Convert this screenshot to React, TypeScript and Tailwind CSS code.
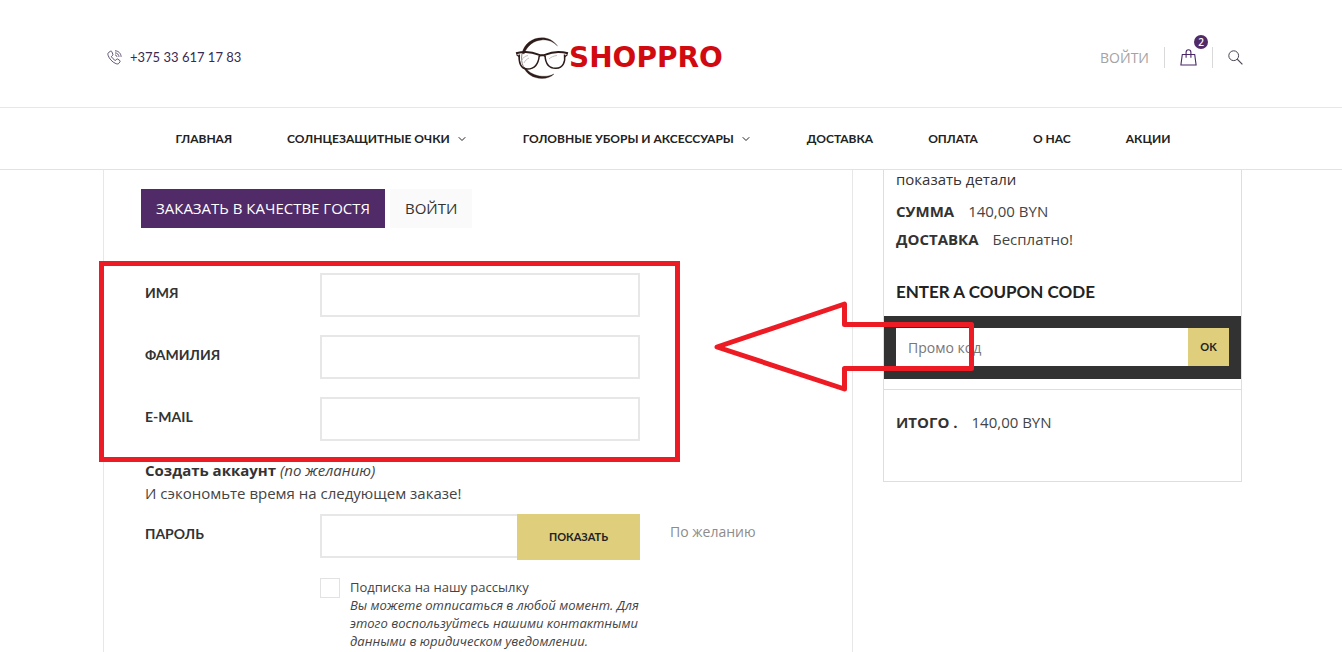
import { ChevronDown } from "lucide-react";

const navItems = [
  { title: "Главная" },
  { title: "Солнцезащитные очки", dropdown: true },
  { title: "Головные уборы и аксессуары", dropdown: true },
  { title: "Доставка" },
  { title: "Оплата" },
  { title: "О нас" },
  { title: "Акции" },
];

const fields = [
  { id: "firstname", label: "Имя", type: "text" },
  { id: "lastname", label: "Фамилия", type: "text" },
  { id: "email", label: "E-mail", type: "email" },
];

const PhoneIcon = () => (
  <svg width="15" height="15" viewBox="0 0 15 15" fill="none" stroke="#3b2a4f" strokeWidth="0.8">
    <path d="M3.6 1.2 1.7 2.4C.8 3.1.7 4.2 1.1 5.3c1 3.3 4.3 7 7.8 8.3 1.2.5 2.3.5 3.1-.4l1-1.5c.3-.5.2-.9-.2-1.2l-2-1.4c-.5-.3-.9-.3-1.2.1l-.8 1c-.3.3-.6.3-1 0C6.4 9.2 5.4 8.2 4.6 7c-.3-.4-.2-.7.1-.9l.9-.7c.4-.3.4-.7.2-1.2L4.8 1.6c-.3-.5-.7-.7-1.2-.4Z" />
    <path d="M8 .8c3.4 0 6.1 2.7 6.1 6.1M8 2.9c2.2 0 4 1.8 4 4M8 5c1.1 0 1.9.8 1.9 1.9" />
  </svg>
);

const BagIcon = () => (
  <svg width="17" height="17" viewBox="0 0 17 17" fill="none" stroke="#4a2767" strokeWidth="1.1">
    <path d="M2.3 5.5h12.4l1.4 10.5H.9L2.3 5.5Z" />
    <path d="M6.1 8.8V3.2C6.1 1.7 7 .8 8.5.8s2.4.9 2.4 2.4v5.6" />
  </svg>
);

const SearchIcon = () => (
  <svg width="15" height="15" viewBox="0 0 15 15" fill="none" stroke="#4b4453" strokeWidth="1">
    <circle cx="5.7" cy="5.7" r="4.9" />
    <path d="m9.2 9.2 5.2 5.2" strokeWidth="1.2" />
  </svg>
);

const GlassesLogo = () => (
  <svg width="54" height="42" viewBox="0 0 54 42" fill="none" stroke="#2d1c19">
    {/* brush ring, open on the right */}
    <path d="M42.500 9C38 3 32.500.8 27 .8 17 .8 9 7 7 16.500l2.200.3C12 9 18.500 3.400 27 2.900 33 2.500 38 4.500 42.500 9Z" fill="#2d1c19" strokeWidth="0.3" />
    <path d="M8.500 30c3 7 9.500 11.400 18.500 11.400 5 0 9-1.400 12-4.400-4 2-7.500 2.500-12 2.200C19.500 38.700 14 35.500 10.500 31Z" fill="#2d1c19" strokeWidth="0.3" />
    <path d="M7 16.500C6.200 21 6.500 26 8.500 30" stroke="#8d8380" strokeWidth="1" />
    {/* lenses */}
    <path d="M4.3 17.500C3.500 25 5.500 32 12.500 32c7.500 0 11-5.500 11.800-13.500" strokeWidth="1.5" />
    <path d="M30 18.500C30.500 26.500 34 31.500 41 31.300c7.500-.2 9.500-6.800 8.500-13.800" strokeWidth="1.5" />
    {/* frame top */}
    <path d="M1 16.300C8 14.500 17 14.800 23.500 17.600c2.300.8 4.700.8 7 0C37 14.800 46 14.500 53 16.300" strokeWidth="2" />
    <path d="M1.500 17.500 4.500 20M52.500 17.500l-3 2.500M24 19.500c2-1.300 4.500-1.300 6.500 0" strokeWidth="1.2" />
    <path d="M7 23c1-2.500 3-4 6-4.500M9 26c1-2.500 3-4 5-5M34 22c2-2 5-3.200 8-3.500" stroke="#b4aeab" strokeWidth="0.8" />
  </svg>
);

const Header = () => (
  <header className="border-b border-[#e7e7e7]">
    <div className="mx-auto grid h-[107px] max-w-[1144px] grid-cols-[1fr_320px_1fr] items-center pt-2 pl-2">
      <a href="tel:+375336171783" className="flex items-center gap-2 font-[Lato] text-[13px] text-[#3b2a4f]">
        <PhoneIcon />
        +375 33 617 17 83
      </a>
      <a href="/" className="flex items-center" aria-label="Shoppro">
        <GlassesLogo />
        <span className="font-['DejaVu_Sans'] text-[28px] leading-8 font-bold text-[#d10a10]">SHOPPRO</span>
      </a>
      <div className="flex items-center justify-end">
        <a href="/login" className="pr-[15px] text-sm text-[#a3a3a3]">
          ВОЙТИ
        </a>
        <a href="/cart" aria-label="Корзина" className="relative border-x border-[#d9d9d9] px-[15px] py-0.5">
          <BagIcon />
          <span className="absolute -top-3 right-1 flex size-3.5 items-center justify-center rounded-full bg-[#512b67] text-[10px] font-semibold text-white">
            2
          </span>
        </a>
        <button type="button" aria-label="Поиск" className="pl-[15px]">
          <SearchIcon />
        </button>
      </div>
    </div>
  </header>
);

const Nav = () => (
  <nav className="border-b border-[#e2e2e2]">
    <ul className="flex h-[61px] items-center justify-center gap-[55px] pl-1 font-[Lato] text-xs font-bold text-[#222] uppercase">
      {navItems.map((item) => (
        <li key={item.title}>
          <a href="#" className="flex items-center gap-1.5 whitespace-nowrap">
            {item.title}
            {item.dropdown && <ChevronDown className="size-3" />}
          </a>
        </li>
      ))}
    </ul>
  </nav>
);

const inputClass = "h-11 border-2 border-[#e7e7e7] bg-white px-3 text-sm outline-none";
const labelClass = "w-[175px] shrink-0 pt-2.5 font-[Lato] text-sm leading-5 font-bold uppercase";

const GuestForm = () => (
  <section className="border-x border-[#e7e7e7] pt-[19px] pb-1 pl-[37px]">
    <div className="flex gap-[5px] text-[15px]">
      <button type="button" className="h-[39px] bg-[#512b67] px-[15px] text-white">
        ЗАКАЗАТЬ В КАЧЕСТВЕ ГОСТЯ
      </button>
      <button type="button" className="h-[39px] bg-[#fafafa] px-[15px]">
        ВОЙТИ
      </button>
    </div>

    <form className="mt-[45px] pl-1">
      <div className="relative flex flex-col gap-[18px]">
        {fields.map((field) => (
          <div key={field.id} className="flex">
            <label htmlFor={field.id} className={labelClass}>
              {field.label}
            </label>
            <input id={field.id} type={field.type} className={`${inputClass} w-80`} />
          </div>
        ))}
        {/* required fields highlight */}
        <div className="pointer-events-none absolute -top-3 -bottom-[21px] -left-[46px] w-[581px] border-5 border-[#ed1c24]" />
      </div>

      <p className="mt-[18px] text-[15px] leading-[23px] text-[#444]">
        <strong className="text-[#333]">Создать аккаунт</strong> <em>(по желанию)</em>
        <br />
        И сэкономьте время на следующем заказе!
      </p>

      <div className="mt-[9px] flex">
        <label htmlFor="password" className={labelClass}>
          Пароль
        </label>
        <input id="password" type="password" className={`${inputClass} w-[197px] border-r-0`} />
        <button type="button" className="h-[46px] w-[123px] bg-[#dfce7c] font-[Lato] text-[11px] font-bold text-[#222]">
          ПОКАЗАТЬ
        </button>
        <span className="pt-2 pl-[30px] text-sm leading-5 text-[#8c8c8c]">По желанию</span>
      </div>

      <div className="mt-[18px] ml-[175px] flex w-[330px] gap-2.5">
        <input
          id="newsletter"
          type="checkbox"
          className="size-5 shrink-0 appearance-none border border-[#e2e2e2] bg-white"
        />
        <label htmlFor="newsletter" className="text-[13px] leading-[18px] text-[#444]">
          Подписка на нашу рассылку
          <br />
          <em>
            Вы можете отписаться в любой момент. Для этого воспользуйтесь нашими контактными данными в
            юридическом уведомлении.
          </em>
        </label>
      </div>
    </form>
  </section>
);

const Summary = () => (
  <aside className="self-start border border-t-0 border-[#dedede] text-[15px]">
    <div className="px-3">
      <a href="#" className="block leading-[19px]">
        показать детали
      </a>
      <dl className="mt-2 leading-7">
        <div className="flex gap-3.5">
          <dt className="font-bold">СУММА</dt>
          <dd className="text-[#444]">140,00 BYN</dd>
        </div>
        <div className="flex gap-3.5">
          <dt className="font-bold">ДОСТАВКА</dt>
          <dd className="text-[#444]">Бесплатно!</dd>
        </div>
      </dl>
      <h3 className="mt-[29px] font-[Lato] text-[17px] leading-5 font-bold text-[#222]">ENTER A COUPON CODE</h3>
    </div>
    <form className="mt-3.5 flex bg-[#323232] px-3 pt-3 pb-[13px]">
      <input
        aria-label="Промо код"
        placeholder="Промо код"
        className="h-[38px] min-w-0 flex-1 bg-white px-3 text-sm outline-none placeholder:text-[#777]"
      />
      <button type="button" className="h-[38px] w-[41px] bg-[#dfce7c] font-[Lato] text-[11px] font-bold text-[#222]">
        OK
      </button>
    </form>
    <div className="mt-2.5 flex gap-3.5 border-t border-[#dedede] px-3 pt-[18px] pb-[45px] leading-7">
      <span className="font-bold">ИТОГО .</span>
      <span className="text-[#444]">140,00 BYN</span>
    </div>
  </aside>
);

const Arrow = () => (
  <svg
    className="pointer-events-none absolute top-[130px] left-[608px]"
    width="264"
    height="94"
    viewBox="0 0 264 94"
    fill="none"
    stroke="#ed1c24"
    strokeWidth="5"
    strokeLinejoin="round"
  >
    <path d="M6 47 133.500 4v20.500H260.500v44H133.500V89Z" />
  </svg>
);

export default function App() {
  return (
    <div className="flex min-h-screen flex-col bg-white font-['Open_Sans',sans-serif] text-[#333]">
      <Header />
      <Nav />
      <main className="mx-auto flex w-full max-w-[1144px] flex-1 pr-px pl-1">
        <div className="relative grid flex-1 grid-cols-[1fr_359px] gap-[30px]">
          <GuestForm />
          <Summary />
          <Arrow />
        </div>
      </main>
    </div>
  );
}
